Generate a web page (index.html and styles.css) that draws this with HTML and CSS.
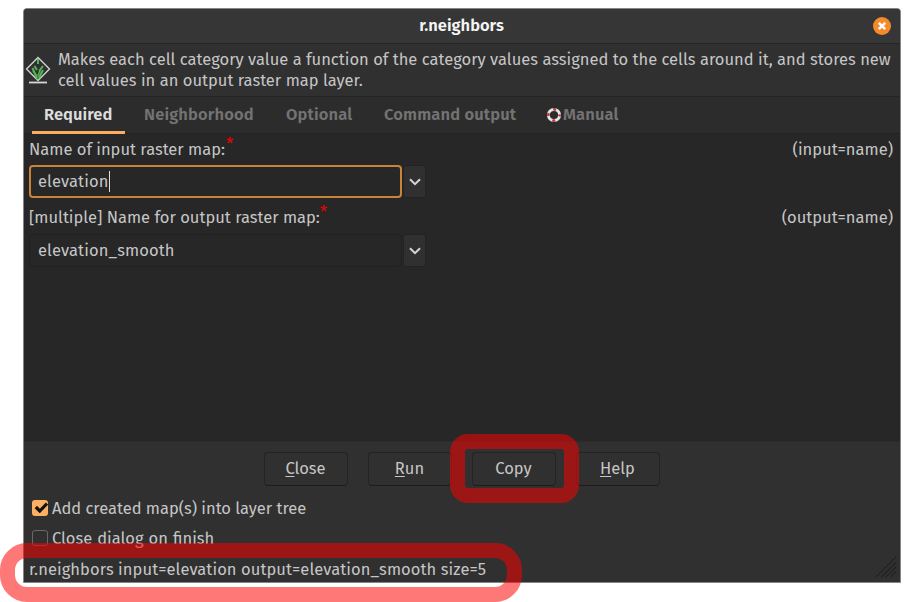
FILE: index.html
```html
<!DOCTYPE html>
<html lang="en">
<head>
<meta charset="utf-8">
<title>r.neighbors</title>
<link rel="stylesheet" href="styles.css">
</head>
<body>
<main class="window">
  <header class="titlebar">
    <h1 class="title">r.neighbors</h1>
    <button class="close" aria-label="Close window"><svg viewBox="0 0 18 18"><circle cx="9" cy="9" r="9" fill="#f48b2a"/><path d="M5.8 5.8l6.4 6.4M12.2 5.8l-6.4 6.4" stroke="#fff" stroke-width="2.5"/></svg></button>
  </header>
  <section class="description">
    <svg class="module-icon" viewBox="0 0 26 30"><path d="M13 1.5L24.5 13 13 24.5 1.5 13z" fill="none" stroke="#d2d2d2" stroke-width="1.4"/><path d="M4 26.5h18" stroke="#d8d8d8" stroke-width="1.8"/><path d="M12.5 23.500L7.500 12M12.500 23L15 14l3-4M14 22l4-8M12 20l-4-5M13 3v5M9.500 10l2.500 4" fill="none" stroke="#58b854" stroke-width="1.9"/><path d="M12 18l1 5 2-7" fill="none" stroke="#3b8f3c"/></svg>
    <p class="summary"><span>Makes each cell category value a function of the category values assigned to the cells around it, and stores new</span><br><span>cell values in an output raster map layer.</span></p>
  </section>
  <nav class="tabs">
    <span class="tab active">Required</span>
    <span class="tab neighborhood">Neighborhood</span>
    <span class="tab optional">Optional</span>
    <span class="tab command">Command output</span>
    <span class="tab manual"><svg viewBox="0 0 16 16"><circle cx="8" cy="8" r="5.6" fill="none" stroke="#e5e5e5" stroke-width="3"/><circle cx="8" cy="8" r="5.6" fill="none" stroke="#bd3a3a" stroke-width="2.6" stroke-dasharray="3 5.796" stroke-dashoffset="1.5"/></svg>Manual</span>
  </nav>
  <section class="panel">
    <div class="label-row"><label>Name of input raster map:</label><span class="star">*</span><span class="hint">(input=name)</span></div>
    <div class="combo"><div class="field focused"><span>elevation</span><i class="caret"></i></div><button class="drop" aria-label="Choose input"><svg viewBox="0 0 12 8"><path d="M1 1.2l5 5 5-5" fill="none" stroke="#d4d4d4" stroke-width="2"/></svg></button></div>
    <div class="label-row second"><label>[multiple] Name for output raster map:</label><span class="star">*</span><span class="hint">(output=name)</span></div>
    <div class="combo"><div class="field"><span>elevation_smooth</span></div><button class="drop" aria-label="Choose output"><svg viewBox="0 0 12 8"><path d="M1 1.2l5 5 5-5" fill="none" stroke="#d4d4d4" stroke-width="2"/></svg></button></div>
  </section>
  <div class="actions">
    <button class="action"><u>C</u>lose</button>
    <button class="action"><u>R</u>un</button>
    <button class="action">Copy<i class="ring copy-ring"></i></button>
    <button class="action"><u>H</u>elp</button>
  </div>
  <div class="options">
    <div class="option"><span class="box checked"><svg viewBox="0 0 16 16"><path d="M3.8 7l4 4L15 3.500" fill="none" stroke="#111" stroke-width="3.2"/></svg></span><span class="tree-label">Add created map(s) into layer tree</span></div>
    <div class="option"><span class="box"></span><span class="finish-label">Close dialog on finish</span></div>
  </div>
  <footer class="status"><span class="command-line">r.neighbors input=elevation output=elevation_smooth size=5</span><svg class="grip" viewBox="0 0 24 24"><path d="M1 23L23 1M7 23L23 7M12 23L23 12M17 23l6-6" stroke="#222" stroke-width="1.4"/></svg><i class="ring command-ring"></i></footer>
</main>
</body>
</html>
```

FILE: styles.css
```css
* { box-sizing: border-box; }
body { margin: 0; width: 910px; height: 602px; overflow: hidden; background: #fff; padding: 8px 0 0 23px; font: 16.5px/20px "Fira Sans", "Noto Sans", sans-serif; color: #c6c6c6; }
button { font: inherit; color: inherit; padding: 0; }
svg { display: block; }
span, label { white-space: nowrap; }
.window { width: 878px; height: 575px; border: 1px solid #858585; border-radius: 4px 4px 0 0; background: #303030; display: flex; flex-direction: column; }
.titlebar { height: 35px; flex: none; display: grid; grid-template-columns: 1fr auto 1fr; align-items: center; background: #363636; border-bottom: 1px solid #252525; border-radius: 3px 3px 0 0; }
.title { grid-column: 2; margin: 0; padding-right: 1px; font-size: 16.5px; line-height: 20px; font-weight: 600; color: #f5f5f5; }
.close { width: 18px; height: 18px; border: 0; background: none; justify-self: end; margin-right: 9px; }
.description { height: 53px; flex: none; display: flex; border-bottom: 1px solid #252525; padding: 5px 0 0 1px; }
.module-icon { width: 26px; height: 30px; margin-top: 7px; flex: none; }
.summary { margin: 0 0 0 7px; line-height: 21px; letter-spacing: .015px; }
.tabs { height: 37px; flex: none; display: flex; background: #2c2c2c; border-bottom: 1px solid #232323; padding-left: 8px; font-weight: 600; color: #737373; }
.tab { line-height: 35px; height: 35px; display: flex; align-items: center; flex: none; letter-spacing: .15px; }
.tab.active { height: 37px; width: 93px; padding: 1px 0 0 12px; color: #ddd; border-bottom: 3px solid #fbac61; letter-spacing: .05px; }
.neighborhood { width: 142px; padding-left: 19px; }
.optional { width: 98px; padding-left: 19px; }
.command { width: 163px; padding-left: 19px; }
.manual { padding-left: 18px; }
.manual svg { width: 16px; height: 16px; margin-right: 1px; }
.panel { height: 308px; flex: none; padding: 6px 6px 0 5px; background: #272727; border-bottom: 1px solid #2b2b2b; }
.label-row { height: 25px; display: flex; line-height: 20px; }
.label-row.second { margin-top: 10px; height: 26px; }
.star { color: #f00000; margin: -5px 0 0 1px; }
.second .star { margin-left: 0; }
.hint { margin-left: auto; padding-right: 1px; }
.combo { display: flex; height: 33px; gap: 1px; align-items: center; }
.field { width: 373px; height: 33px; border: 1px solid #212121; border-radius: 4px; padding-left: 8px; display: flex; align-items: center; letter-spacing: .12px; }
.field.focused { border: 2px solid #c98439; padding-left: 7px; }
.caret { width: 1px; height: 21px; background: #ddd; }
.drop { width: 23px; height: 33px; border: 1px solid #232323; border-radius: 3px; background: #303030; display: grid; place-items: center; }
.drop svg { width: 12px; height: 8px; }
.actions { flex: none; height: 53px; display: flex; justify-content: center; gap: 20px; padding: 10px 1px 0 0; }
.action { position: relative; width: 84px; height: 34px; background: #303030; border: 1px solid #242424; border-bottom-color: #1c1c1c; border-radius: 4px; }
.action u { text-decoration-thickness: 1px; text-underline-offset: 2px; }
.options { flex: none; height: 59px; margin-top: -2px; margin-bottom: 2px; }
.option { height: 30px; display: flex; align-items: center; padding-left: 8px; gap: 4px; }
.tree-label { padding-top: 1px; letter-spacing: -.02px; }
.finish-label { padding-top: 1px; word-spacing: .7px; }
.box { width: 16px; height: 16px; border: 1px solid #686868; border-radius: 3px; }
.box.checked { background: #fbb062; border: 0; }
.status { position: relative; height: 32px; flex: none; padding: 6px 0 0 5px; }
.command-line { letter-spacing: .075px; }
.grip { position: absolute; right: 3px; bottom: 8px; width: 22px; height: 22px; }
.ring { position: absolute; border: 15px solid rgba(255,0,0,.53); pointer-events: none; }
.copy-ring { width: 129px; height: 69px; left: -23px; top: -19px; border-radius: 18px; z-index: 2; }
.command-ring { width: 522px; height: 59px; left: -24px; top: -11px; border-radius: 27px; }
```
